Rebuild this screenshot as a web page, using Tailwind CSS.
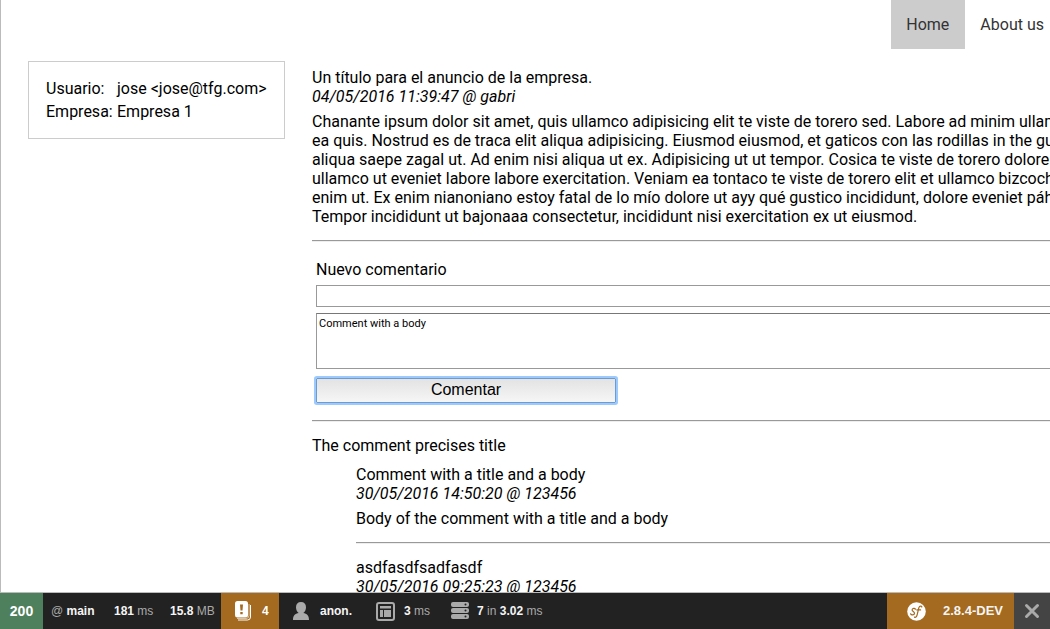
<!DOCTYPE html>
<html lang="es">
<head>
<meta charset="utf-8">
<meta name="viewport" content="width=device-width, initial-scale=1">
<title>Anuncio</title>
<script src="https://cdn.jsdelivr.net/npm/@tailwindcss/browser@4"></script>
</head>
<body class="flex h-screen flex-col overflow-hidden bg-white font-[Roboto,sans-serif] text-base leading-[19px] text-black">
<div class="flex min-h-0 flex-1 flex-col overflow-hidden border-l border-[#bbb]">
  <header class="shrink-0">
    <nav class="-mr-2 flex justify-end text-[#333]">
      <a href="#" class="bg-[#ccc] py-[15px] pr-4 pl-[15px]">Home</a>
      <a href="#" class="py-[15px] pr-[14px] pl-[15px]">About us</a>
    </nav>
  </header>
  <div class="mt-3 flex items-start gap-[27px] pl-[27px]">
    <aside class="w-[257px] shrink-0 border border-[#ccc] px-[17px] py-[15px]">
      <table class="border-collapse whitespace-nowrap leading-[23px]">
        <tbody>
          <tr><th scope="row" class="w-[71px] p-0 text-left font-normal">Usuario:</th><td class="p-0">jose &lt;jose@tfg.com&gt;</td></tr>
          <tr><th scope="row" class="p-0 text-left font-normal">Empresa:</th><td class="p-0">Empresa 1</td></tr>
        </tbody>
      </table>
    </aside>
    <main class="-mr-4 min-w-0 flex-1 pt-[7px]">
      <article>
        <h1 class="font-normal">Un título para el anuncio de la empresa.</h1>
        <p class="italic">04/05/2016 11:39:47 @ gabri</p>
        <p class="mt-[6px] whitespace-nowrap">Chanante ipsum dolor sit amet, quis ullamco adipisicing elit te viste de torero sed. Labore ad minim ullamco<br>ea quis. Nostrud es de traca elit aliqua adipisicing. Eiusmod eiusmod, et gaticos con las rodillas in the guanter<br>aliqua saepe zagal ut. Ad enim nisi aliqua ut ex. Adipisicing ut ut tempor. Cosica te viste de torero dolore<br>ullamco ut eveniet labore labore exercitation. Veniam ea tontaco te viste de torero elit et ullamco bizcoche<br>enim ut. Ex enim nianoniano estoy fatal de lo mío dolore ut ayy qué gustico incididunt, dolore eveniet páharo<br>Tempor incididunt ut bajonaaa consectetur, incididunt nisi exercitation ex ut eiusmod.</p>
      </article>
      <hr class="mt-[14px] h-[2px] border-t border-b border-t-[#999] border-b-[#eee]">
      <form class="mt-[18px] flex flex-col pl-1">
        <label for="titulo">Nuevo comentario</label>
        <input id="titulo" type="text" class="mt-[6px] h-[22px] border border-[#999] px-[2px] text-[11px] outline-none">
        <textarea aria-label="Comentario" class="mt-[6px] h-14 resize-none border border-[#999] border-t-[#777] px-[2px] py-[3px] text-[11px] leading-[14px] outline-none">Comment with a body</textarea>
        <button type="button" class="mt-[9px] flex h-[25px] w-[300px] justify-center rounded-[1px] border border-[#6b9bd1] bg-linear-to-b from-[#e3e3e3] to-[#f6f6f6] font-['Liberation_Sans',Arial,sans-serif] leading-[21px] ring-2 ring-[#9ccaff]">Comentar</button>
      </form>
      <hr class="mt-[17px] h-[2px] border-t border-b border-t-[#999] border-b-[#eee]">
      <section class="mt-[14px]">
        <h2>The comment precises title</h2>
        <div class="mt-[10px] pl-11">
          <article>
            <h3 class="font-normal">Comment with a title and a body</h3>
            <p class="italic">30/05/2016 14:50:20 @ 123456</p>
            <p class="mt-[6px]">Body of the comment with a title and a body</p>
          </article>
          <hr class="mt-[14px] h-[2px] border-t border-b border-t-[#999] border-b-[#eee]">
          <article class="mt-[14px]">
            <h3 class="font-normal">asdfasdfsadfasdf</h3>
            <p class="italic">30/05/2016 09:25:23 @ 123456</p>
          </article>
        </div>
      </section>
    </main>
  </div>
</div>
<footer class="flex h-[37px] shrink-0 items-stretch whitespace-nowrap border-t border-[#bbb] bg-[#222] font-['Liberation_Sans',Arial,sans-serif] text-[12px] leading-[36px] text-[#aaa]">
  <div class="w-[43px] bg-[#4f805d] text-center text-[14px] font-bold text-white">200</div>
  <div class="flex flex-1">
    <div class="w-[71px] pl-2">@ <b class="text-[#f5f5f5]">main</b></div>
    <div class="w-14"><b class="text-[#f5f5f5]">181</b> ms</div>
    <div class="w-[51px]"><b class="text-[#f5f5f5]">15.8</b> MB</div>
    <div class="flex w-[58px] items-center gap-[11px] bg-[#a46a1f] pl-[14px]">
      <svg class="h-5 w-4" viewBox="0 0 16 20" fill="none"><path d="M3 19h9.500q3 0 3-3V4" stroke="#fff"/><path d="M2 17.500h9q3 0 3-3V3" stroke="#fff" stroke-width=".6"/><rect width="13" height="16.500" rx="2.500" fill="#fff"/><path d="M5 3.500h3l-.5 6h-2zM5.300 11h2.400v2.300H5.300z" fill="#a46a1f"/></svg>
      <b class="text-white">4</b>
    </div>
    <div class="flex w-[97px] items-center gap-[11px] pl-[14px]">
      <svg class="h-[18px] w-4" viewBox="0 0 16 18" fill="#aaa"><path d="M8 0c3.200 0 5 2 5 5.200 0 2.500-1.100 4.800-2.700 5.700 3.600.7 5.700 2.400 5.700 7.100H0c0-4.700 2.100-6.400 5.700-7.100C4.100 10 3 7.700 3 5.200 3 2 4.800 0 8 0z"/></svg>
      <b class="text-[#f5f5f5]">anon.</b>
    </div>
    <div class="flex w-[75px] items-center gap-[9px]">
      <svg class="h-[19px] w-[19px]" viewBox="0 0 19 19" fill="none"><rect x="1" y="1" width="17" height="17" rx="2" stroke="#aaa" stroke-width="2"/><path d="M4 4h11v2.500H4zM4 8h3v7H4zM8 8h7v7H8z" fill="#aaa"/></svg>
      <span><b class="text-[#f5f5f5]">3</b> ms</span>
    </div>
    <div class="flex items-center gap-2">
      <svg class="h-[18px] w-[18px]" viewBox="0 0 18 18"><g fill="#aaa"><rect width="18" height="5" rx="2"/><rect y="6" width="18" height="5" rx="2"/><rect y="12" width="18" height="5" rx="2"/></g><g fill="#222"><circle cx="14.500" cy="2.500" r="1"/><circle cx="14.500" cy="8.500" r="1"/><circle cx="14.500" cy="14.500" r="1"/></g></svg>
      <span><b class="text-[#f5f5f5]">7</b> in <b class="text-[#f5f5f5]">3.02</b> ms</span>
    </div>
  </div>
  <div class="flex w-[127px] items-center gap-[17px] bg-[#a46a1f] pl-5">
    <svg class="h-[19px] w-[19px]" viewBox="0 0 19 19"><circle cx="9.500" cy="9.500" r="9.300" fill="#fff"/><g fill="none" stroke="#a46a1f" stroke-width="1.200" stroke-linecap="round"><path d="M8.400 7.200C8 5.900 5.100 6 5.100 7.900c0 1.500 2.600 1.800 2.400 3.500-.2 1.900-3.400 2-3.900.4"/><path d="M14.800 5.100c0-1.500-2.300-1.400-2.900.5-.8 2.500-1.100 5.300-1.900 7.700-.5 1.600-1.400 2.400-2.500 1.800M9.800 7.900h3.800"/></g></svg>
    <span class="text-[13px] font-bold text-[#f5f5f5]">2.8.4-DEV</span>
  </div>
  <button type="button" aria-label="Cerrar" class="flex w-9 items-center justify-center bg-[#444]">
    <svg class="h-4 w-4" viewBox="0 0 16 16" fill="none" stroke="#aaa" stroke-width="3" stroke-linecap="round"><path d="m2.500 2.500 11 11m0-11-11 11"/></svg>
  </button>
</footer>
</body>
</html>
